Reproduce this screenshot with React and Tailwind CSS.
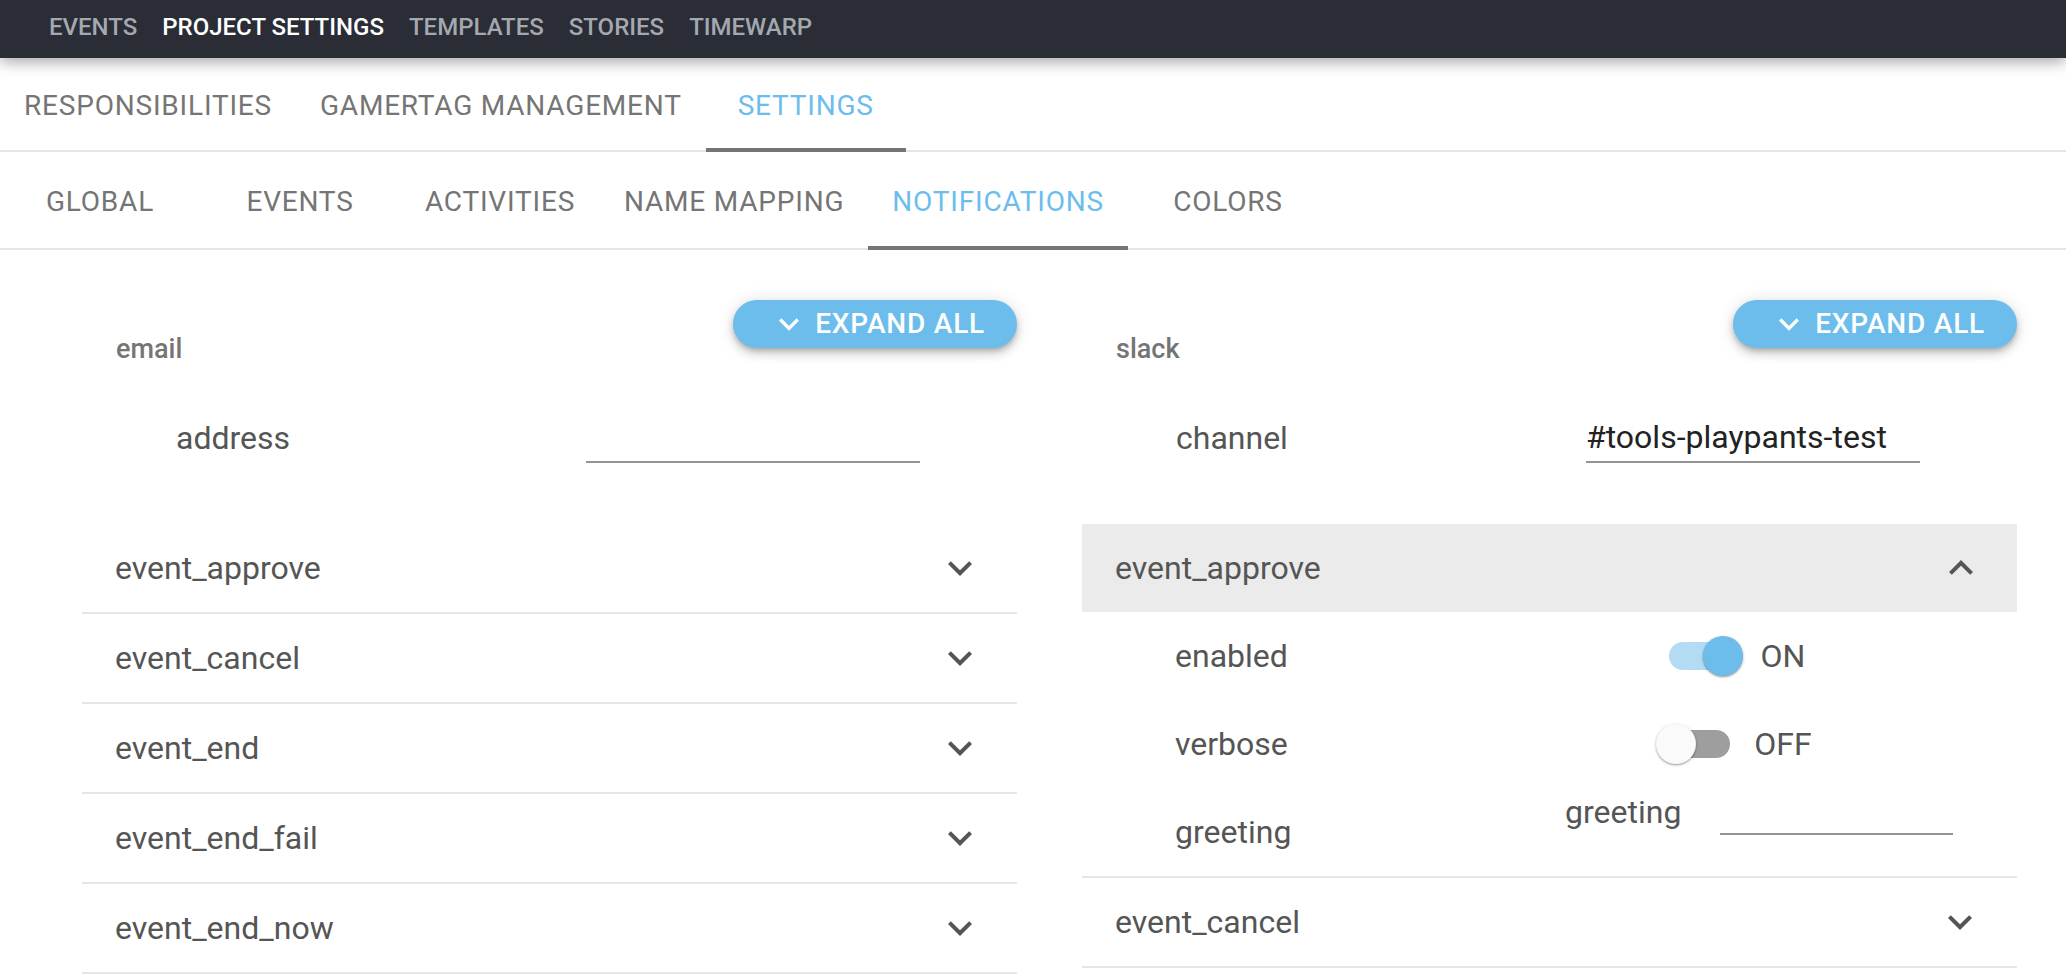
import React from 'react';

const topNav = ['EVENTS', 'PROJECT SETTINGS', 'TEMPLATES', 'STORIES', 'TIMEWARP'];
const mainTabs = ['RESPONSIBILITIES', 'GAMERTAG MANAGEMENT', 'SETTINGS'];
const settingsTabs = ['GLOBAL', 'EVENTS', 'ACTIVITIES', 'NAME MAPPING', 'NOTIFICATIONS', 'COLORS'];
const emailEvents = ['event_approve', 'event_cancel', 'event_end', 'event_end_fail', 'event_end_now'];

function ExpandIcon({ up, className }) {
  return (
    <svg viewBox="0 0 24 24" className={className} fill="currentColor">
      <path d={up ? 'M7.41 15.41 12 10.83l4.59 4.58L18 14l-6-6-6 6z' : 'M16.59 8.59 12 13.17 7.41 8.59 6 10l6 6 6-6z'} />
    </svg>
  );
}

function TabRow({ tabs, active, height }) {
  return (
    <div className={`flex border-b-2 border-[#e6e6e6] ${height}`}>
      {tabs.map(t => (
        <div
          key={t}
          className={`relative flex min-w-[200px] items-center justify-center px-6 pt-[4px] text-[28px] tracking-[0.8px] ${t === active ? 'text-[#6cbdec]' : 'text-[#757575]'}`}
        >
          {t}
          {t === active && <div className="absolute bottom-[-2px] left-0 right-0 h-[4px] bg-[#757575]" />}
        </div>
      ))}
    </div>
  );
}

function ExpandAllButton() {
  return (
    <button className="flex h-[48px] items-center rounded-full bg-[#6cbdec] pl-[36px] pr-[32px] text-[28px] font-medium tracking-[0.8px] text-white shadow-[0_3px_5px_-1px_rgba(0,0,0,0.2),0_6px_10px_0_rgba(0,0,0,0.14),0_1px_18px_0_rgba(0,0,0,0.12)]">
      <ExpandIcon className="mr-[6px] h-[40px] w-[40px]" />
      EXPAND ALL
    </button>
  );
}

function ColumnHeader({ label }) {
  return (
    <div className="flex items-start justify-between">
      <span className="mt-[36px] pl-[34px] text-[27px] font-medium leading-[26px] text-[#757575]">{label}</span>
      <ExpandAllButton />
    </div>
  );
}

function FieldRow({ label, value }) {
  return (
    <div className="mt-[51px] flex h-[50px] items-center">
      <span className="w-[504px] pl-[94px] text-[32px] leading-[38px] text-[#555]">{label}</span>
      <div className="h-[50px] w-[334px] border-b-2 border-[#949494] text-[32px] leading-[48px] text-[#222]">{value}</div>
    </div>
  );
}

function AccordionRow({ title }) {
  return (
    <div className="flex h-[90px] items-center justify-between border-b-2 border-[#e6e6e6] pl-[33px] pr-[33px]">
      <span className="text-[32px] text-[#555]">{title}</span>
      <ExpandIcon className="h-[48px] w-[48px] text-[#555]" />
    </div>
  );
}

function Switch({ on }) {
  return (
    <div className="flex items-center">
      <div className="flex w-[116px] justify-center">
        <div className={`relative h-[28px] w-[68px] rounded-full ${on ? 'bg-[#b3dcf4]' : 'bg-[#9e9e9e]'}`}>
          <div
            className={`absolute top-[-6px] h-[40px] w-[40px] rounded-full shadow-[0_1px_3px_rgba(0,0,0,0.3),0_1px_1px_rgba(0,0,0,0.14)] ${on ? 'right-[-6px] bg-[#6cbdec]' : 'left-[-6px] bg-[#fafafa]'}`}
          />
        </div>
      </div>
      <span className="text-[32px] text-[#555]">{on ? 'ON' : 'OFF'}</span>
    </div>
  );
}

function DetailRow({ label, children }) {
  return (
    <div className="flex h-[88px] items-center">
      <span className="w-[400px] pl-[93px] text-[32px] text-[#555]">{label}</span>
      {children}
    </div>
  );
}

export default function App() {
  return (
    <div className="min-h-screen bg-white font-[Roboto,sans-serif]">
      <div className="relative z-10 flex h-[58px] items-center gap-[25px] bg-[#2a2d35] pb-[4px] pl-[49px] shadow-[0_4px_14px_rgba(0,0,0,0.35)]">
        {topNav.map(n => (
          <span key={n} className={`text-[24px] font-medium ${n === 'PROJECT SETTINGS' ? 'text-white' : 'text-[#a4a8af]'}`}>
            {n}
          </span>
        ))}
      </div>

      <TabRow tabs={mainTabs} active="SETTINGS" height="h-[94px]" />
      <TabRow tabs={settingsTabs} active="NOTIFICATIONS" height="h-[98px]" />

      <div className="flex gap-[65px] pl-[82px] pr-[49px]">
        {/* email */}
        <div className="flex-1 pt-[50px]">
          <ColumnHeader label="email" />
          <FieldRow label="address" value="" />
          <div className="mt-[61px]">
            {emailEvents.map(e => (
              <AccordionRow key={e} title={e} />
            ))}
          </div>
        </div>

        {/* slack */}
        <div className="flex-1 pt-[50px]">
          <ColumnHeader label="slack" />
          <FieldRow label="channel" value="#tools-playpants-test" />
          <div className="mt-[61px]">
            <div className="flex h-[88px] items-center justify-between bg-[#ebebeb] pl-[33px] pr-[32px]">
              <span className="text-[32px] text-[#555]">event_approve</span>
              <ExpandIcon up className="h-[48px] w-[48px] text-[#555]" />
            </div>
            <div className="border-b-2 border-[#e6e6e6]">
              <DetailRow label="enabled">
                <div className="flex w-[486px] justify-center">
                  <Switch on />
                </div>
              </DetailRow>
              <DetailRow label="verbose">
                <div className="flex w-[486px] justify-center">
                  <Switch on={false} />
                </div>
              </DetailRow>
              <DetailRow label="greeting">
                <div className="mb-[36px] flex items-start pl-[83px]">
                  <span className="text-[32px] leading-[38px] text-[#555]">greeting</span>
                  <div className="ml-[39px] h-[42px] w-[233px] border-b-2 border-[#949494]" />
                </div>
              </DetailRow>
            </div>
            <AccordionRow title="event_cancel" />
          </div>
        </div>
      </div>
    </div>
  );
}
